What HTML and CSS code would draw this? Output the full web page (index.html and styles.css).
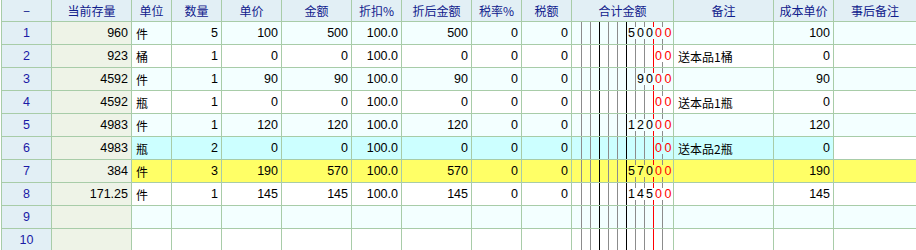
FILE: index.html
```html
<!DOCTYPE html>
<html lang="zh">
<head>
<meta charset="utf-8">
<title>单据明细</title>
<link rel="stylesheet" href="styles.css">
</head>
<body>
<div class="grid">
  <div class="row hd">
    <div class="c">−</div><div class="c">当前存量</div><div class="c">单位</div><div class="c">数量</div><div class="c">单价</div><div class="c">金额</div><div class="c">折扣%</div><div class="c">折后金额</div><div class="c">税率%</div><div class="c">税额</div><div class="c">合计金额</div><div class="c">备注</div><div class="c">成本单价</div><div class="c last">事后备注</div>
  </div>

  <div class="row odd">
    <div class="c no">1</div><div class="c n stk">960</div><div class="c t">件</div><div class="c n">5</div><div class="c n">100</div><div class="c n">500</div><div class="c n">100.0</div><div class="c n">500</div><div class="c n">0</div><div class="c n">0</div>
    <div class="c amt"><span></span><span></span><span></span><span></span><span></span><span></span><span><b>5</b></span><span><b>0</b></span><span><b>0</b></span><span><b>0</b></span><span><b>0</b></span></div>
    <div class="c t"></div><div class="c n">100</div><div class="c last"></div>
  </div>

  <div class="row even">
    <div class="c no">2</div><div class="c n stk">923</div><div class="c t">桶</div><div class="c n">1</div><div class="c n">0</div><div class="c n">0</div><div class="c n">100.0</div><div class="c n">0</div><div class="c n">0</div><div class="c n">0</div>
    <div class="c amt"><span></span><span></span><span></span><span></span><span></span><span></span><span></span><span></span><span></span><span><b>0</b></span><span><b>0</b></span></div>
    <div class="c t">送本品1桶</div><div class="c n">0</div><div class="c last"></div>
  </div>

  <div class="row odd">
    <div class="c no">3</div><div class="c n stk">4592</div><div class="c t">件</div><div class="c n">1</div><div class="c n">90</div><div class="c n">90</div><div class="c n">100.0</div><div class="c n">90</div><div class="c n">0</div><div class="c n">0</div>
    <div class="c amt"><span></span><span></span><span></span><span></span><span></span><span></span><span></span><span><b>9</b></span><span><b>0</b></span><span><b>0</b></span><span><b>0</b></span></div>
    <div class="c t"></div><div class="c n">90</div><div class="c last"></div>
  </div>

  <div class="row even">
    <div class="c no">4</div><div class="c n stk">4592</div><div class="c t">瓶</div><div class="c n">1</div><div class="c n">0</div><div class="c n">0</div><div class="c n">100.0</div><div class="c n">0</div><div class="c n">0</div><div class="c n">0</div>
    <div class="c amt"><span></span><span></span><span></span><span></span><span></span><span></span><span></span><span></span><span></span><span><b>0</b></span><span><b>0</b></span></div>
    <div class="c t">送本品1瓶</div><div class="c n">0</div><div class="c last"></div>
  </div>

  <div class="row odd">
    <div class="c no">5</div><div class="c n stk">4983</div><div class="c t">件</div><div class="c n">1</div><div class="c n">120</div><div class="c n">120</div><div class="c n">100.0</div><div class="c n">120</div><div class="c n">0</div><div class="c n">0</div>
    <div class="c amt"><span></span><span></span><span></span><span></span><span></span><span></span><span><b>1</b></span><span><b>2</b></span><span><b>0</b></span><span><b>0</b></span><span><b>0</b></span></div>
    <div class="c t"></div><div class="c n">120</div><div class="c last"></div>
  </div>

  <div class="row sel">
    <div class="c no">6</div><div class="c n stk">4983</div><div class="c t">瓶</div><div class="c n">2</div><div class="c n">0</div><div class="c n">0</div><div class="c n">100.0</div><div class="c n">0</div><div class="c n">0</div><div class="c n">0</div>
    <div class="c amt"><span></span><span></span><span></span><span></span><span></span><span></span><span></span><span></span><span></span><span><b>0</b></span><span><b>0</b></span></div>
    <div class="c t">送本品2瓶</div><div class="c n">0</div><div class="c last blank"></div>
  </div>

  <div class="row hl">
    <div class="c no">7</div><div class="c n stk">384</div><div class="c t">件</div><div class="c n">3</div><div class="c n">190</div><div class="c n">570</div><div class="c n">100.0</div><div class="c n">570</div><div class="c n">0</div><div class="c n">0</div>
    <div class="c amt"><span></span><span></span><span></span><span></span><span></span><span></span><span><b>5</b></span><span><b>7</b></span><span><b>0</b></span><span><b>0</b></span><span><b>0</b></span></div>
    <div class="c t"></div><div class="c n">190</div><div class="c last"></div>
  </div>

  <div class="row even">
    <div class="c no">8</div><div class="c n stk">171.25</div><div class="c t">件</div><div class="c n">1</div><div class="c n">145</div><div class="c n">145</div><div class="c n">100.0</div><div class="c n">145</div><div class="c n">0</div><div class="c n">0</div>
    <div class="c amt"><span></span><span></span><span></span><span></span><span></span><span></span><span><b>1</b></span><span><b>4</b></span><span><b>5</b></span><span><b>0</b></span><span><b>0</b></span></div>
    <div class="c t"></div><div class="c n">145</div><div class="c last"></div>
  </div>

  <div class="row odd">
    <div class="c no">9</div><div class="c n stk"></div><div class="c t"></div><div class="c n"></div><div class="c n"></div><div class="c n"></div><div class="c n"></div><div class="c n"></div><div class="c n"></div><div class="c n"></div>
    <div class="c amt"><span></span><span></span><span></span><span></span><span></span><span></span><span></span><span></span><span></span><span></span><span></span></div>
    <div class="c t"></div><div class="c n"></div><div class="c last"></div>
  </div>

  <div class="row even">
    <div class="c no">10</div><div class="c n stk"></div><div class="c t"></div><div class="c n"></div><div class="c n"></div><div class="c n"></div><div class="c n"></div><div class="c n"></div><div class="c n"></div><div class="c n"></div>
    <div class="c amt"><span></span><span></span><span></span><span></span><span></span><span></span><span></span><span></span><span></span><span></span><span></span></div>
    <div class="c t"></div><div class="c n"></div><div class="c last"></div>
  </div>
</div>
</body>
</html>
```

FILE: styles.css
```css
body {
  margin: 0;
  background: #ffffff;
  font-family: "Liberation Sans", Arial, "Noto Sans CJK SC", sans-serif;
  font-size: 12.5px;
  color: #000;
}

.grid {
  margin-left: 1px;
  border-left: 1px solid #a8cca8;
  width: 915px;
  box-sizing: border-box;
}

.row {
  display: grid;
  grid-template-columns: 50px 80px 40px 50px 60px 70px 50px 70px 50px 50px 102px 100px 60px 82px;
  height: 23px;
  background: var(--bg);
}

.odd { --bg: #f3ffff; }
.even { --bg: #ffffff; }
.sel { --bg: #ccffff; }
.hl { --bg: #ffff66; }

.c {
  box-sizing: border-box;
  border-right: 1px solid #a8cca8;
  border-bottom: 1px solid #a8cca8;
  display: flex;
  align-items: center;
  padding: 0 3px 0 4px;
  white-space: nowrap;
  overflow: hidden;
  min-width: 0;
}

.c.last { border-right: none; }
.c.blank { background: #ffffff; }

.hd {
  height: 22px;
  background: #e2eff5;
}

.hd .c {
  justify-content: center;
  padding: 0;
  color: #10208c;
  font-family: "Noto Sans CJK SC", sans-serif;
  font-size: 12px;
}

.n { justify-content: flex-end; }

.t {
  justify-content: flex-start;
  font-family: "Noto Sans CJK SC", sans-serif;
  font-size: 12px;
}

.no {
  justify-content: center;
  padding: 0;
  background: #e2eff5;
  color: #1a1aa6;
}

.stk { background: #eef3e7; }

.amt {
  padding: 0;
  align-items: stretch;
}

.amt > span {
  width: 9px;
  flex: none;
  box-sizing: border-box;
  border-right: 1px solid #8c8c8c;
  display: flex;
  align-items: center;
}

.amt > span:first-child { width: 10px; }
.amt > span:nth-child(3),
.amt > span:nth-child(6) { border-right-color: #000000; }
.amt > span:nth-child(9) { border-right-color: #ff0000; }
.amt > span:last-child {
  flex: 1;
  border-right: none;
}

.amt b {
  font-weight: normal;
  flex: 1 0 auto;
  margin-right: -1px;
  height: 12px;
  line-height: 12px;
  text-align: center;
  background: var(--bg);
  position: relative;
}

.amt > span:nth-child(n+10) b { color: #ff0000; }
.amt > span:last-child b { margin-right: 0; }
```
